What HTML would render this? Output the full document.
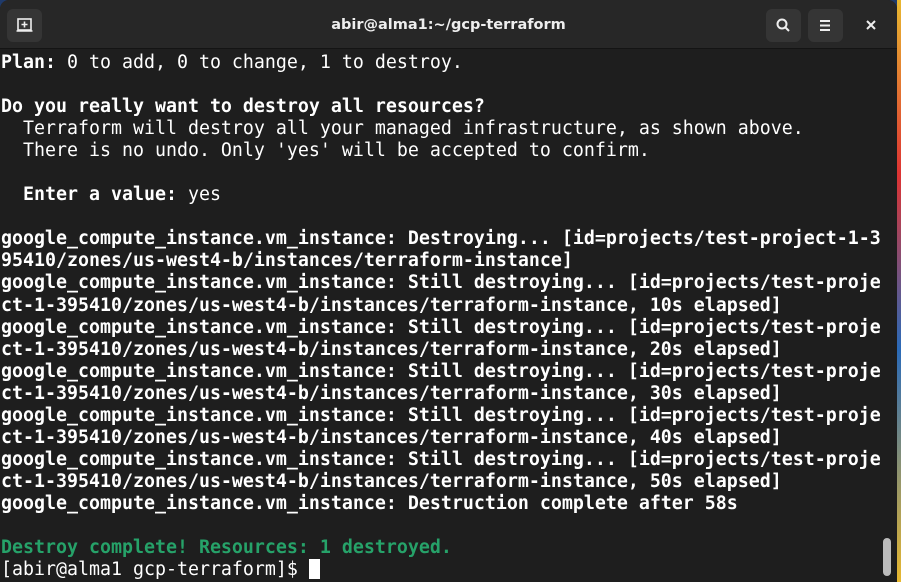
<!DOCTYPE html>
<html><head><style>
html,body{margin:0;padding:0;width:901px;height:582px;overflow:hidden;background:#1f3a6a;}
.win{position:absolute;left:0;top:0;width:897px;height:582px;background:#1e1e1e;border-radius:9px 9px 0 0;overflow:hidden;}
.tb{position:absolute;left:0;top:0;width:897px;height:48px;background:#272727;border-bottom:1px solid #141414;}
.btn{position:absolute;top:9px;width:35px;height:33px;background:#353535;border-radius:6px;}
.title{position:absolute;left:0;width:897px;top:0;text-align:center;color:#eee;font:bold 14.5px "DejaVu Sans","Liberation Sans",sans-serif;line-height:50px;}
.term{position:absolute;left:1px;top:52px;font-family:"DejaVu Sans Mono","Liberation Mono",monospace;font-size:18.27px;line-height:22.05px;color:#fff;white-space:pre;}
b{font-weight:bold}
.g{color:#26a269;font-weight:bold}
.sb{position:absolute;left:883px;top:538px;width:8px;height:38px;background:#bbb;border-radius:4px;}
.cur{display:inline-block;width:11px;height:20px;background:#fff;vertical-align:-4px;}
</style></head><body>
<div style="position:absolute;left:897px;top:0;width:4px;height:582px;background:linear-gradient(#e8b830,#d33 30%,#2a6ab8 60%,#e8b830)"></div>
<div class="win">
<div class="tb">
<div class="btn" style="left:7px;"><svg width="35" height="33"><rect x="11" y="10" width="13" height="11" fill="none" stroke="#eee" stroke-width="1.6"/><line x1="9.5" y1="22" x2="25.5" y2="22" stroke="#eee" stroke-width="1.6"/><path d="M17.5 12.5v6M14.5 15.5h6" stroke="#eee" stroke-width="1.6"/></svg></div>
<div class="title">abir@alma1:~/gcp-terraform</div>
<div class="btn" style="left:766px;"><svg width="35" height="33"><circle cx="16" cy="15" r="4.5" fill="none" stroke="#eee" stroke-width="2"/><line x1="19.5" y1="18.5" x2="23" y2="22" stroke="#eee" stroke-width="2"/></svg></div>
<div class="btn" style="left:808px;"><svg width="35" height="33"><path d="M12 12h10M12 16.5h10M12 21h10" stroke="#eee" stroke-width="2"/></svg></div>
<svg style="position:absolute;left:864px;top:18px" width="14" height="14"><path d="M3 3l8 8M11 3l-8 8" stroke="#eee" stroke-width="2"/></svg>
</div>
<div class="term"><b>Plan:</b> 0 to add, 0 to change, 1 to destroy.

<b>Do you really want to destroy all resources?</b>
  Terraform will destroy all your managed infrastructure, as shown above.
  There is no undo. Only 'yes' will be accepted to confirm.

  <b>Enter a value:</b> yes

<b>google_compute_instance.vm_instance: Destroying... [id=projects/test-project-1-3
95410/zones/us-west4-b/instances/terraform-instance]
google_compute_instance.vm_instance: Still destroying... [id=projects/test-proje
ct-1-395410/zones/us-west4-b/instances/terraform-instance, 10s elapsed]
google_compute_instance.vm_instance: Still destroying... [id=projects/test-proje
ct-1-395410/zones/us-west4-b/instances/terraform-instance, 20s elapsed]
google_compute_instance.vm_instance: Still destroying... [id=projects/test-proje
ct-1-395410/zones/us-west4-b/instances/terraform-instance, 30s elapsed]
google_compute_instance.vm_instance: Still destroying... [id=projects/test-proje
ct-1-395410/zones/us-west4-b/instances/terraform-instance, 40s elapsed]
google_compute_instance.vm_instance: Still destroying... [id=projects/test-proje
ct-1-395410/zones/us-west4-b/instances/terraform-instance, 50s elapsed]
google_compute_instance.vm_instance: Destruction complete after 58s</b>

<span class="g">Destroy complete! Resources: 1 destroyed.</span>
[abir@alma1 gcp-terraform]$ <span class="cur"></span></div>
<div class="sb"></div>
</div>
</body></html>
